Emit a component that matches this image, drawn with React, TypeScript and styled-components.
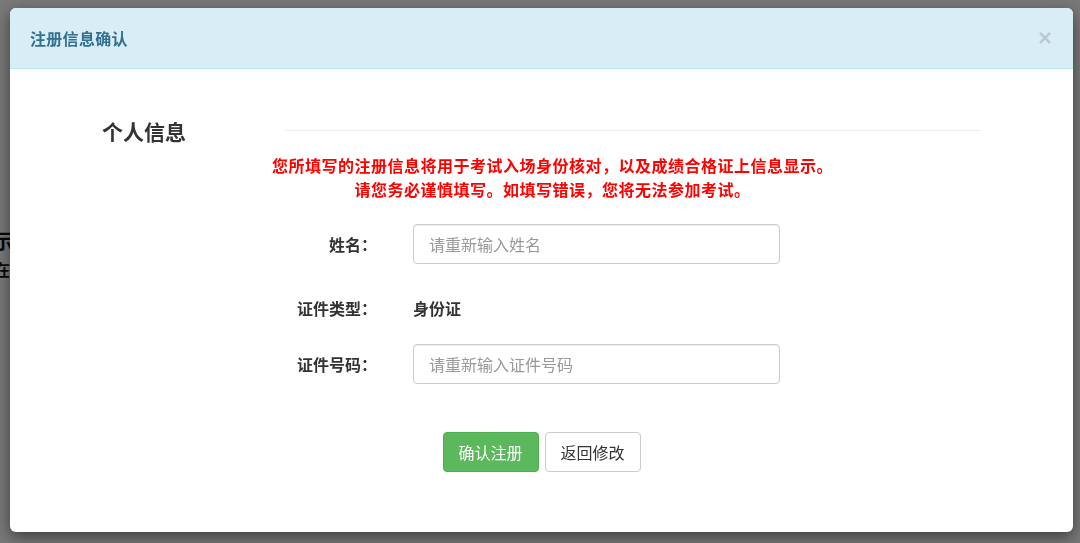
import React from "react";
import styled, { createGlobalStyle } from "styled-components";

const GlobalStyle = createGlobalStyle`
  html, body {
    margin: 0;
    padding: 0;
    background: #ffffff;
    font-family: "Noto Sans CJK SC", "Noto Sans", "Liberation Sans", sans-serif;
    overflow: hidden;
  }
  * { box-sizing: border-box; }
`;

const Page = styled.div`
  width: 1080px;
  height: 543px;
  padding-top: 226px;
  margin-left: -7px;
  color: #111;
`;

const PageTitle = styled.div`
  font-size: 20px;
  font-weight: 700;
  line-height: 30px;
`;

const PageText = styled.div`
  font-size: 16px;
  font-weight: 700;
  line-height: 26px;
  margin-left: 1px;
`;

const Backdrop = styled.div`
  position: fixed;
  inset: 0;
  background: rgba(0, 0, 0, 0.53);
  padding: 8px 7px 0 10px;
`;

const Modal = styled.div`
  width: 1063px;
  height: 524px;
  background: #fff;
  border-radius: 6px;
  box-shadow: 0 5px 15px rgba(0, 0, 0, 0.5);
  display: flex;
  flex-direction: column;
`;

const Header = styled.div`
  height: 61px;
  background: #d9edf7;
  border-bottom: 1px solid #bce8f1;
  border-radius: 6px 6px 0 0;
  padding: 0 20px;
  display: flex;
  align-items: center;
  justify-content: space-between;
`;

const Title = styled.h4`
  margin: 0;
  font-size: 16px;
  font-weight: 700;
  color: #31708f;
  line-height: 22px;
  letter-spacing: 0.3px;
`;

const Close = styled.span`
  font-family: "Liberation Sans", "DejaVu Sans", sans-serif;
  font-size: 24px;
  font-weight: 700;
  color: #000;
  opacity: 0.14;
  line-height: 22px;
  margin-right: 1px;
`;

const Body = styled.div`
  padding: 48px 92px 0 92px;
  display: flex;
  flex-direction: column;
`;

const SectionRow = styled.div`
  display: flex;
  align-items: center;
  height: 28px;
`;

const SectionTitle = styled.h3`
  margin: 0;
  width: 183px;
  font-size: 21px;
  font-weight: 700;
  color: #333;
  line-height: 28px;
`;

const Rule = styled.div`
  flex: 1;
  height: 1px;
  background: #eeeeee;
  margin-bottom: 2px;
`;

const Notice = styled.p`
  margin: 8px 0 0 22px;
  text-align: center;
  color: #ff0000;
  font-size: 16px;
  font-weight: 700;
  line-height: 24px;
  letter-spacing: 0.5px;
`;

const Form = styled.div`
  margin-top: 23px;
  padding-left: 153px;
  display: flex;
  flex-direction: column;
`;

const FormRow = styled.div<{ $h: number; $mb: number }>`
  display: flex;
  align-items: center;
  height: ${(p) => p.$h}px;
  margin-bottom: ${(p) => p.$mb}px;
`;

const Label = styled.label`
  width: 122px;
  text-align: right;
  font-size: 16px;
  font-weight: 700;
  color: #333;
  line-height: 22px;
`;

const Control = styled.div`
  margin-left: 36px;
  display: flex;
  align-items: center;
`;

const Input = styled.input`
  width: 367px;
  height: 40px;
  border: 1px solid #cccccc;
  border-radius: 4px;
  padding: 0 15px;
  font-family: inherit;
  font-size: 16px;
  color: #555;
  outline: none;
  box-shadow: inset 0 1px 1px rgba(0, 0, 0, 0.075);
  &::placeholder {
    color: #999;
  }
`;

const Static = styled.span`
  font-size: 16px;
  font-weight: 700;
  color: #333;
  line-height: 22px;
`;

const Actions = styled.div`
  margin-top: 48px;
  display: flex;
  justify-content: center;
  gap: 6px;
`;

const Button = styled.button<{ $primary?: boolean }>`
  width: 96px;
  height: 40px;
  border-radius: 4px;
  font-family: inherit;
  font-size: 16px;
  line-height: 22px;
  padding: 0;
  cursor: pointer;
  background: ${(p) => (p.$primary ? "#5cb85c" : "#ffffff")};
  color: ${(p) => (p.$primary ? "#ffffff" : "#333333")};
  border: 1px solid ${(p) => (p.$primary ? "#4cae4c" : "#cccccc")};
`;

export default function App() {
  return (
    <>
      <GlobalStyle />
      <Page>
        <PageTitle>示</PageTitle>
        <PageText>在</PageText>
      </Page>
      <Backdrop>
        <Modal>
          <Header>
            <Title>注册信息确认</Title>
            <Close>×</Close>
          </Header>
          <Body>
            <SectionRow>
              <SectionTitle>个人信息</SectionTitle>
              <Rule />
            </SectionRow>
            <Notice>
              您所填写的注册信息将用于考试入场身份核对，以及成绩合格证上信息显示。
              <br />
              请您务必谨慎填写。如填写错误，您将无法参加考试。
            </Notice>
            <Form>
              <FormRow $h={40} $mb={30}>
                <Label>姓名：</Label>
                <Control>
                  <Input placeholder="请重新输入姓名" />
                </Control>
              </FormRow>
              <FormRow $h={28} $mb={22}>
                <Label>证件类型：</Label>
                <Control>
                  <Static>身份证</Static>
                </Control>
              </FormRow>
              <FormRow $h={40} $mb={0}>
                <Label>证件号码：</Label>
                <Control>
                  <Input placeholder="请重新输入证件号码" />
                </Control>
              </FormRow>
            </Form>
            <Actions>
              <Button $primary>确认注册</Button>
              <Button>返回修改</Button>
            </Actions>
          </Body>
        </Modal>
      </Backdrop>
    </>
  );
}
